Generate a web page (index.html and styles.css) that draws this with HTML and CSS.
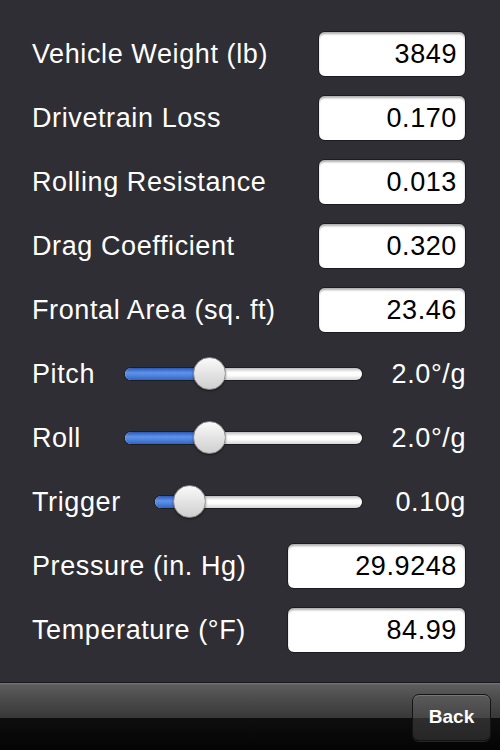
FILE: index.html
```html
<!DOCTYPE html>
<html>
<head>
<meta charset="utf-8">
<link rel="stylesheet" href="styles.css">
</head>
<body>
<div class="screen">
  <main class="form">
    <div class="row"><span class="label">Vehicle Weight (lb)</span><div class="field">3849</div></div>
    <div class="row"><span class="label">Drivetrain Loss</span><div class="field">0.170</div></div>
    <div class="row"><span class="label">Rolling Resistance</span><div class="field">0.013</div></div>
    <div class="row"><span class="label">Drag Coefficient</span><div class="field">0.320</div></div>
    <div class="row"><span class="label">Frontal Area (sq. ft)</span><div class="field">23.46</div></div>
    <div class="row"><span class="label label-slider">Pitch</span>
      <div class="slider"><div class="track"><div class="fill" style="width:35.6%"></div></div><div class="knob" style="left:35.6%"></div></div>
      <span class="value">2.0°/g</span></div>
    <div class="row"><span class="label label-slider">Roll</span>
      <div class="slider"><div class="track"><div class="fill" style="width:35.6%"></div></div><div class="knob" style="left:35.6%"></div></div>
      <span class="value">2.0°/g</span></div>
    <div class="row"><span class="label label-slider label-wide">Trigger</span>
      <div class="slider"><div class="track"><div class="fill" style="width:16.9%"></div></div><div class="knob" style="left:16.9%"></div></div>
      <span class="value">0.10g</span></div>
    <div class="row"><span class="label">Pressure (in. Hg)</span><div class="field field-wide">29.9248</div></div>
    <div class="row"><span class="label">Temperature (°F)</span><div class="field field-wide">84.99</div></div>
  </main>
  <footer class="toolbar">
    <button class="back">Back</button>
  </footer>
</div>
</body>
</html>
```
FILE: styles.css
```css
html, body {
  margin: 0;
  padding: 0;
  background: #2f2e34;
}
.screen {
  width: 500px;
  height: 750px;
  display: flex;
  flex-direction: column;
  font-family: "Liberation Sans", Arial, sans-serif;
}
.form {
  padding: 22px 34px 0 32px;
}
.row {
  height: 64px;
  display: flex;
  align-items: center;
}
.label {
  flex: 1;
  color: #ffffff;
  font-size: 27px;
  letter-spacing: 0.6px;
  white-space: nowrap;
}
.label-slider {
  flex: 0 0 93px;
}
.label-wide {
  flex: 0 0 123px;
}
.field {
  box-sizing: border-box;
  width: 148px;
  height: 46px;
  border-radius: 7px;
  background: linear-gradient(#e9e9e9 0, #ffffff 4px, #ffffff 100%);
  border: 1px solid #1c1b20;
  box-shadow: inset 0 2px 2px rgba(0,0,0,0.25);
  color: #000;
  font-size: 27px;
  letter-spacing: 0.6px;
  text-align: right;
  padding: 0 8px 0 0;
  line-height: 44px;
}
.field-wide {
  width: 179px;
}
.slider {
  flex: 1;
  position: relative;
  height: 34px;
}
.track {
  position: absolute;
  left: 0;
  right: 0;
  top: 11px;
  height: 12px;
  border-radius: 6px;
  background: linear-gradient(#bdbdbd 0, #ffffff 35%, #ffffff 60%, #d6d6d6 100%);
  box-shadow: 0 0 0 1px rgba(0,0,0,0.35);
  overflow: hidden;
}
.fill {
  height: 100%;
  background: linear-gradient(#2b58b6 0, #5f93ea 40%, #4f82dc 65%, #2e64c8 100%);
}
.knob {
  position: absolute;
  top: 0;
  width: 33px;
  height: 33px;
  margin-left: -16.5px;
  box-sizing: border-box;
  border-radius: 50%;
  border: 1px solid #8c8c8c;
  background: linear-gradient(#fafafa 0, #e4e4e4 50%, #cfcfcf 100%);
  box-shadow: 0 1px 2px rgba(0,0,0,0.5);
}
.value {
  flex: 0 0 104px;
  text-align: right;
  color: #fff;
  font-size: 27px;
  letter-spacing: 0.6px;
}
.toolbar {
  margin-top: auto;
  height: 68px;
  box-sizing: border-box;
  border-top: 1px solid #1a1a1e;
  background: linear-gradient(#7a7a7a 0, #5c5c5c 2px, #4a4a4a 17px, #383838 35px, #0e0e0e 35px, #040404 100%);
  display: flex;
  justify-content: flex-end;
  align-items: center;
  padding: 0 9px 0 0;
}
.back {
  width: 79px;
  height: 47px;
  margin-top: 1px;
  border-radius: 7px;
  border: 1px solid #141414;
  background: linear-gradient(#5a5a5a 0, #464646 50%, #2e2e2e 50%, #262626 100%);
  box-shadow: inset 0 1px 0 rgba(255,255,255,0.18), 0 1px 0 rgba(255,255,255,0.12);
  color: #fff;
  font-family: "Liberation Sans", Arial, sans-serif;
  font-weight: bold;
  font-size: 19px;
  padding: 0;
}
```
